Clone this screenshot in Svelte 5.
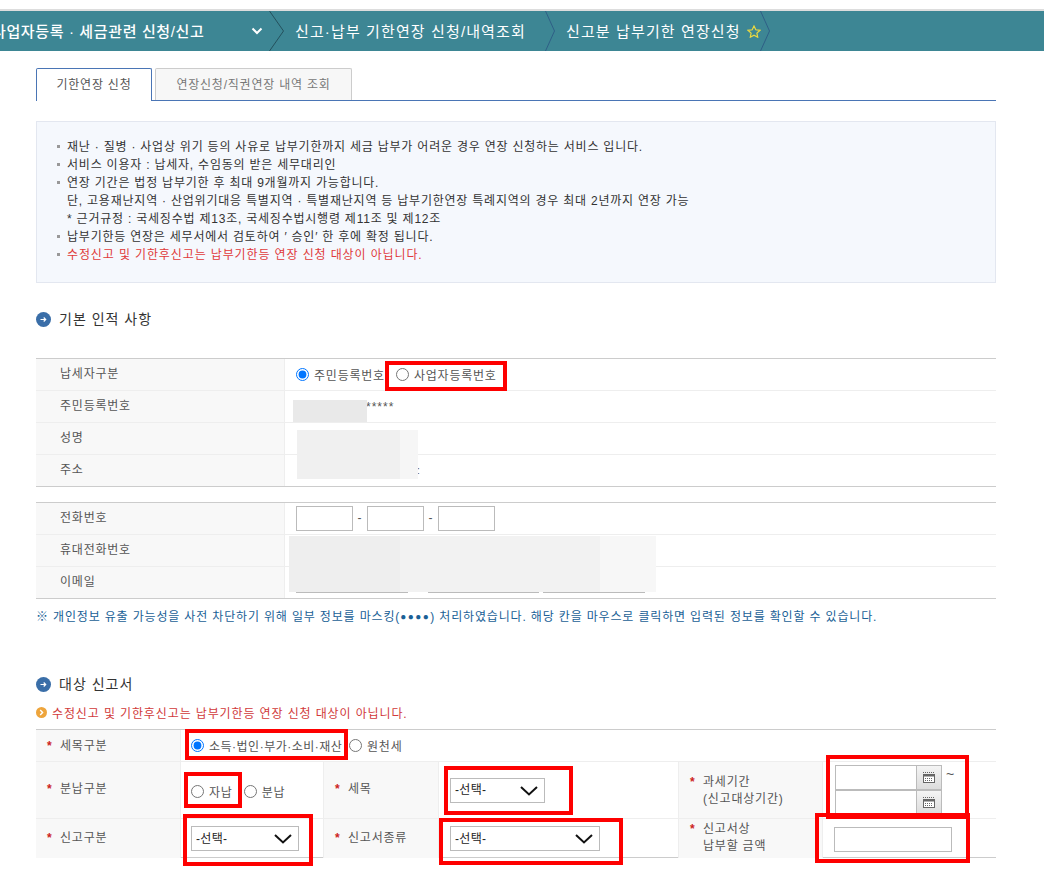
<script>
  const info = [
    { t: '재난 · 질병 · 사업상 위기 등의 사유로 납부기한까지 세금 납부가 어려운 경우 연장 신청하는 서비스 입니다.', b: true },
    { t: '서비스 이용자 : 납세자, 수임동의 받은 세무대리인', b: true },
    { t: '연장 기간은 법정 납부기한 후 최대 9개월까지 가능합니다.', b: true },
    { t: '단, 고용재난지역 · 산업위기대응 특별지역 · 특별재난지역 등 납부기한연장 특례지역의 경우 최대 2년까지 연장 가능', b: false },
    { t: '* 근거규정 : 국세징수법 제13조, 국세징수법시행령 제11조 및 제12조', b: false },
    { t: '납부기한등 연장은 세무서에서 검토하여 ′ 승인′ 한 후에 확정 됩니다.', b: true },
    { t: '수정신고 및 기한후신고는 납부기한등 연장 신청 대상이 아닙니다.', b: true, red: true }
  ];
  const box = (x1, y1, x2, y2, c) => `left:${x1}px;top:${y1}px;width:${x2 - x1}px;height:${y2 - y1}px;` + (c ? `background:${c}` : '');
  const masks = [
    [293, 400, 367, 422, '#e9e9e9'],
    [297, 430, 400, 479, '#f0f0f0'],
    [400, 430, 418, 479, '#f6f6f6'],
    [289, 536, 400, 592, '#eeeeee'],
    [400, 536, 600, 592, '#f2f2f2'],
    [600, 536, 656, 592, '#f7f7f7']
  ];
  const redBoxes = [
    [385, 361, 507, 391],
    [185, 729, 348, 760],
    [184, 772, 242, 808],
    [444, 766, 573, 815],
    [826, 755, 969, 819],
    [183, 814, 313, 866],
    [439, 818, 623, 865],
    [815, 813, 970, 863]
  ];
</script>

{#snippet sep(w, color)}
  <svg class="sep" width={w} height="40" viewBox="0 0 {w} 40"><path d="M0.5 0 L{w - 0.5} 20 L0.5 40" fill="none" stroke={color} /></svg>
{/snippet}

{#snippet cal()}
  <button class="cal" type="button" aria-label="달력">
    <svg width="12" height="11" viewBox="0 0 12 11">
      <path d="M0 0.5h12" stroke="#666" stroke-dasharray="1 1" />
      <rect x="0.5" y="2.5" width="11" height="8" fill="#fff" stroke="#666" />
      <rect x="0.5" y="2.5" width="11" height="2" fill="#666" />
      <path d="M2 6.5h8M2 8.5h8" stroke="#666" stroke-dasharray="1 1" />
    </svg>
  </button>
{/snippet}

{#snippet sel(cls)}
  <span class="selwrap {cls}">
    <select><option>-선택-</option></select>
    <svg class="arrow" width="18" height="10" viewBox="0 0 18 10"><path d="M1 1 L9 8.5 L17 1" fill="none" stroke="#111" stroke-width="2" /></svg>
  </span>
{/snippet}

<div class="page">
  <div class="topline"></div>
  <nav class="bar">
    <span class="crumb first">사업자등록 · 세금관련 신청/신고</span>
    <svg class="down" width="12" height="8" viewBox="0 0 12 8"><path d="M1.5 1.5 L6 6 L10.5 1.5" fill="none" stroke="#fff" stroke-width="2" /></svg>
    {@render sep(15, '#24505c')}
    <span class="crumb second">신고·납부 기한연장 신청/내역조회</span>
    {@render sep(10, '#2f5f86')}
    <span class="crumb third">신고분 납부기한 연장신청</span>
    <svg class="star" width="14" height="13" viewBox="0 0 14 13"><path d="M7 1 L8.8 4.8 L13 5.3 L9.9 8.1 L10.7 12.2 L7 10.2 L3.3 12.2 L4.1 8.1 L1 5.3 L5.2 4.8 Z" fill="none" stroke="#ecd93f" stroke-width="1.2" /></svg>
    {@render sep(10, '#2f5f86')}
  </nav>

  <main class="content">
    <div class="tabs">
      <div class="tab on">기한연장 신청</div>
      <div class="tab">연장신청/직권연장 내역 조회</div>
    </div>

    <ul class="info">
      {#each info as l}
        <li class:bullet={l.b} class:red={l.red}>{l.t}</li>
      {/each}
    </ul>

    <h2 class="head h1">
      <svg width="15" height="15" viewBox="0 0 15 15"><circle cx="7.5" cy="7.5" r="7.5" fill="#3a6ea8" /><path d="M4.5 7.5h5M7.7 5.5l2 2-2 2" fill="none" stroke="#fff" stroke-width="1.2" /></svg>
      <span>기본 인적 사항</span>
    </h2>

    <div class="tbl">
      <div class="row">
        <div class="th">납세자구분</div>
        <div class="td">
          <label class="r"><input type="radio" name="a" checked /><span>주민등록번호</span></label>
          <label class="r r2"><input type="radio" name="a" /><span>사업자등록번호</span></label>
        </div>
      </div>
      <div class="row">
        <div class="th">주민등록번호</div>
        <div class="td stars">*****</div>
      </div>
      <div class="row"><div class="th">성명</div><div class="td"></div></div>
      <div class="row">
        <div class="th">주소</div>
        <div class="td addr">:</div>
      </div>
    </div>

    <div class="tbl t2">
      <div class="row">
        <div class="th">전화번호</div>
        <div class="td tel">
          <input class="inp" /><span>-</span><input class="inp" /><span>-</span><input class="inp" />
        </div>
      </div>
      <div class="row"><div class="th">휴대전화번호</div><div class="td"></div></div>
      <div class="row">
        <div class="th">이메일</div>
        <div class="td mail">
          <input class="inp m1" /><input class="inp m2" /><input class="inp m3" />
        </div>
      </div>
    </div>

    <p class="note">※ 개인정보 유출 가능성을 사전 차단하기 위해 일부 정보를 마스킹(<span class="dots">●●●●</span>) 처리하였습니다. 해당 칸을 마우스로 클릭하면 입력된 정보를 확인할 수 있습니다.</p>

    <h2 class="head h2">
      <svg width="15" height="15" viewBox="0 0 15 15"><circle cx="7.5" cy="7.5" r="7.5" fill="#3a6ea8" /><path d="M4.5 7.5h5M7.7 5.5l2 2-2 2" fill="none" stroke="#fff" stroke-width="1.2" /></svg>
      <span>대상 신고서</span>
    </h2>

    <p class="warn">
      <svg width="11" height="11" viewBox="0 0 11 11"><circle cx="5.5" cy="5.5" r="5.5" fill="#eea53c" /><path d="M4.2 3l2.4 2.5L4.2 8" fill="none" stroke="#fff" stroke-width="1.4" /></svg>
      <span>수정신고 및 기한후신고는 납부기한등 연장 신청 대상이 아닙니다.</span>
    </p>

    <div class="form">
      <div class="fth top"><b>*</b>세목구분</div>
      <div class="ftd wide">
        <label class="r"><input type="radio" name="b" checked /><span class="tax">소득·법인·부가·소비·재산</span></label>
        <label class="r r3"><input type="radio" name="b" /><span>원천세</span></label>
      </div>

      <div class="fth mid"><b>*</b>분납구분</div>
      <div class="ftd low">
        <label class="r"><input type="radio" name="c" /><span>자납</span></label>
        <label class="r r4"><input type="radio" name="c" /><span>분납</span></label>
      </div>
      <div class="fth mid"><b>*</b>세목</div>
      <div class="ftd sel1">{@render sel('s95')}</div>
      <div class="fth two"><b>*</b><span>과세기간<br />(신고대상기간)</span></div>
      <div class="ftd dates">
        <div class="dategrp">
          <div class="date"><input class="dinp" />{@render cal()}</div>
          <div class="date"><input class="dinp" />{@render cal()}</div>
        </div>
        <span class="tilde">~</span>
      </div>

      <div class="fth end"><b>*</b>신고구분</div>
      <div class="ftd end">{@render sel('s108')}</div>
      <div class="fth end"><b>*</b>신고서종류</div>
      <div class="ftd end sel1">{@render sel('s150')}</div>
      <div class="fth two end"><b>*</b><span>신고서상<br />납부할 금액</span></div>
      <div class="ftd end amt"><input class="inp amount" /></div>
    </div>
  </main>

  {#each masks as m}
    <div class="mask" style={box(m[0], m[1], m[2], m[3], m[4])}></div>
  {/each}
  {#each redBoxes as b}
    <div class="redbox" style={box(b[0], b[1], b[2], b[3])}></div>
  {/each}
</div>

<style>
  :global(body) { margin: 0; background: #fff; }
  .page {
    position: relative;
    width: 1044px;
    height: 886px;
    overflow: hidden;
    font-family: "Liberation Sans", "Noto Sans CJK KR", sans-serif;
    font-size: 12px;
    letter-spacing: 0.78px;
    color: #555;
  }
  .topline { height: 9px; border-bottom: 2px solid #ddd; }
  .bar {
    display: flex;
    align-items: center;
    height: 40px;
    background: #3d8694;
    color: #fff;
    white-space: nowrap;
  }
  .crumb { font-size: 15px; letter-spacing: 1.12px; padding-bottom: 2px; }
  .first { width: 212px; margin-left: -8px; flex: none; font-weight: 500; letter-spacing: 0.63px; }
  .down { margin-left: 47px; margin-right: 6px; flex: none; }
  .sep { flex: none; }
  .second { width: 250px; margin-left: 11px; flex: none; }
  .third { margin-left: 11px; width: 181px; flex: none; }
  .star { flex: none; margin-right: -1px; }
  .content { margin-left: 36px; width: 960px; }
  .tabs {
    display: flex;
    gap: 3px;
    height: 33px;
    margin-top: 17px;
    border-bottom: 1px solid #4a75b5;
    box-sizing: border-box;
  }
  .tab {
    box-sizing: border-box;
    height: 32px;
    width: 197px;
    border: 1px solid #ccc;
    border-bottom: 0;
    background: #f7f7f7;
    color: #777;
    text-align: center;
    line-height: 32px;
    border-radius: 2px 2px 0 0;
  }
  .tab.on {
    width: 116px;
    height: 33px;
    border-color: #4a75b5;
    background: #fff;
    color: #555;
  }
  .info {
    list-style: none;
    margin: 20px 0 0;
    padding: 16px 0 0 30px;
    height: 162px;
    box-sizing: border-box;
    background: #f5f8fd;
    border: 1px solid #e3e7f0;
    line-height: 18px;
    color: #333;
  }
  .info li { white-space: nowrap; }
  .info li.bullet { position: relative; }
  .info li.bullet::before {
    content: "";
    position: absolute;
    left: -10px;
    top: 7px;
    width: 3px;
    height: 3px;
    background: #999;
  }
  .info li.red { color: #e03a3a; letter-spacing: 0.88px; }
  .head {
    display: flex;
    align-items: center;
    gap: 8px;
    margin: 0;
    height: 20px;
    font-size: 14px;
    font-weight: 400;
    letter-spacing: 1px;
    color: #333;
  }
  .head span { padding-bottom: 1px; }
  .head svg { margin-top: 2px; }
  .h1 { margin-top: 25px; margin-bottom: 30px; }
  .h2 { margin-top: 47px; }
  .tbl { border-top: 1px solid #ccc; }
  .t2 { margin-top: 15px; }
  .row {
    display: grid;
    grid-template-columns: 249px 1fr;
    height: 32px;
    box-sizing: border-box;
    border-bottom: 1px solid #eee;
  }
  .row:last-child { border-bottom-color: #ccc; }
  .th {
    background: #f8f8f8;
    border-right: 1px solid #eee;
    padding-left: 24px;
    line-height: 30px;
    color: #555;
  }
  .td { display: flex; align-items: center; padding-left: 11px; min-width: 0; position: relative; }
  .r { display: inline-flex; align-items: center; gap: 5px; color: #555; }
  .r input { margin: 0; width: 13px; height: 13px; }
  .r2 { margin-left: 11px; }
  .r3 { margin-left: 10px; }
  .r4 { margin-left: 11px; }
  .tax { width: 130px; white-space: nowrap; letter-spacing: 0.5px; }
  .stars { padding-left: 81px; padding-top: 1px; letter-spacing: 1px; }
  .addr { padding-left: 132px; font-size: 10px; }
  .inp {
    box-sizing: border-box;
    height: 25px;
    border: 1px solid #bbb;
    background: #fff;
    padding: 0;
    margin: 0;
    outline: 0;
  }
  .tel { gap: 4px; padding-bottom: 1px; }
  .tel .inp { width: 57px; }
  .tel span { width: 6px; text-align: center; }
  .mail { align-items: flex-start; padding-top: 1px; }
  .m1 { width: 112px; }
  .m2 { width: 111px; margin-left: 20px; }
  .m3 { width: 102px; margin-left: 4px; }
  .note { margin: 9px 0 0; line-height: 18px; color: #1a5f96; white-space: nowrap; letter-spacing: 0.84px; }
  .dots { font-size: 10px; letter-spacing: 1.5px; vertical-align: 1px; }
  .warn {
    display: flex;
    align-items: center;
    gap: 5px;
    margin: 11px 0 0;
    height: 18px;
    color: #d13a3a;
    letter-spacing: 0.88px;
  }
  .warn span { padding-bottom: 2px; }
  .warn svg { margin-bottom: 1px; }
  .form {
    margin-top: 7px;
    display: grid;
    grid-template-columns: 145px 143px 115px 240px 144px 1fr;
    grid-template-rows: 32px 57px 39px;
    border-top: 1px solid #ccc;
    border-bottom: 1px solid #ccc;
    height: 127px;
  }
  .fth {
    display: flex;
    align-items: center;
    background: #f8f8f8;
    padding-left: 11px;
    border-right: 1px solid #eee;
    border-bottom: 1px solid #eee;
    line-height: 17px;
  }
  .fth.top { padding-top: 2px; }
  .fth.mid { padding-bottom: 2px; }
  .fth b { width: 13px; flex: none; color: #c22; font-weight: 700; font-size: 12px; letter-spacing: 0; }
  .fth.two { align-items: flex-start; padding-top: 12px; }
  .fth.end { border-bottom: 0; }
  .fth.two.end { padding-top: 2px; }
  .ftd {
    display: flex;
    align-items: center;
    padding-left: 10px;
    border-right: 1px solid #eee;
    border-bottom: 1px solid #eee;
    min-width: 0;
  }
  .ftd.end { border-bottom: 0; }
  .ftd.sel1 { padding-left: 11px; }
  .ftd:last-child, .dates { border-right: 0; }
  .wide { grid-column: 2 / -1; padding-bottom: 1px; border-right: 0; }
  .low { padding-top: 2px; }
  .selwrap { position: relative; display: block; height: 25px; }
  .s95 { width: 95px; }
  .s108 { width: 108px; }
  .s150 { width: 150px; }
  select {
    appearance: none;
    -webkit-appearance: none;
    display: block;
    box-sizing: border-box;
    width: 100%;
    height: 25px;
    border: 1px solid #bbb;
    border-radius: 0;
    background: #fff;
    padding: 0 0 0 4px;
    font: inherit;
    letter-spacing: 0.3px;
    color: #222;
  }
  .arrow { position: absolute; right: 7px; top: 8px; pointer-events: none; }
  .dates { align-items: flex-start; padding-left: 12px; padding-top: 3px; }
  .dategrp { width: 107px; flex: none; }
  .date { display: flex; height: 25px; }
  .dinp {
    box-sizing: border-box;
    width: 82px;
    height: 25px;
    border: 1px solid #bbb;
    padding: 0;
    margin: 0;
    background: #fff;
  }
  .cal {
    box-sizing: border-box;
    width: 25px;
    height: 25px;
    padding: 0;
    margin: 0;
    border: 1px solid #bbb;
    border-left: 0;
    background: linear-gradient(#f4f4f4, #dcdcdc);
    display: flex;
    align-items: center;
    justify-content: center;
  }
  .tilde { margin-left: 4px; line-height: 18px; font-size: 14px; }
  .amt { padding-left: 11px; padding-top: 2px; }
  .amount { width: 118px; }
  .mask { position: absolute; }
  .redbox {
    position: absolute;
    box-sizing: border-box;
    border: 4px solid #fe0000;
  }
</style>
